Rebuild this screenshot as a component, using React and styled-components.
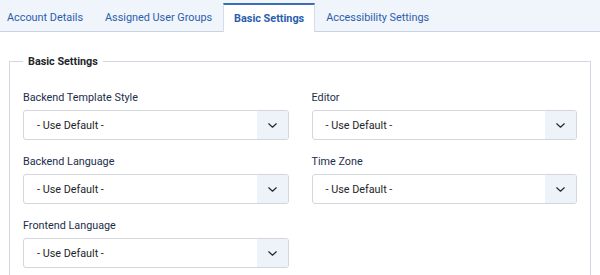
import React from "react";
import styled, { createGlobalStyle } from "styled-components";

const Global = createGlobalStyle`
  html, body { margin: 0; padding: 0; background: #fff; }
  body { font-family: Roboto, "Liberation Sans", sans-serif; }
  * { box-sizing: border-box; }
`;

const Page = styled.div`
  width: 600px;
  height: 275px;
  overflow: hidden;
  background: #fff;
`;

const TabBar = styled.div`
  display: flex;
  align-items: flex-end;
  height: 32px;
  background: #f0f4fb;
  border-bottom: 1px solid #c9d3e3;
`;

const Tab = styled.div`
  height: ${(p) => (p.$active ? "29px" : "28px")};
  display: flex;
  align-items: center;
  padding: 0 ${(p) => (p.$active ? "10px" : "11px")};
  margin-bottom: ${(p) => (p.$active ? "-1px" : "0")};
  font-size: 10.85px;
  color: #2a5ead;
  font-weight: ${(p) => (p.$active ? 700 : 400)};
  background: ${(p) => (p.$active ? "#fff" : "transparent")};
  border-top: ${(p) => (p.$active ? "2px solid #3d6db5" : "none")};
  border-left: ${(p) => (p.$active ? "1px solid #d5dde9" : "none")};
  border-right: ${(p) => (p.$active ? "1px solid #d5dde9" : "none")};
  white-space: nowrap;
  &:first-child { padding-left: 7px; }
`;

const Fieldset = styled.fieldset`
  margin: 23px 9px 0 9px;
  padding: 23px 13px 20px 13px;
  border: 1px solid #d0d7e2;
  border-radius: 0;
  min-width: 0;
`;

const Legend = styled.legend`
  font-size: 10.8px;
  font-weight: 700;
  color: #22262a;
  padding: 0 5px;
  margin-left: 0;
`;

const Grid = styled.div`
  display: grid;
  grid-template-columns: 1fr 1fr;
  column-gap: 23px;
  row-gap: 15px;
`;

const Field = styled.div`
  display: flex;
  flex-direction: column;
`;

const Label = styled.label`
  font-size: 10.8px;
  color: #1c2d4b;
  margin-bottom: 5px;
  line-height: 14px;
`;

const Select = styled.div`
  display: flex;
  height: 30px;
  border: 1px solid #d3d6da;
  border-radius: 3px;
  overflow: hidden;
  background: #fff;
`;

const Value = styled.div`
  flex: 1;
  display: flex;
  align-items: center;
  padding-left: 13px;
  font-size: 10.8px;
  color: #22262a;
`;

const Arrow = styled.div`
  width: 31px;
  display: flex;
  align-items: center;
  justify-content: center;
  background: #eef2f9;
`;

const Chevron = () => (
  <svg width="9" height="5" viewBox="0 0 9 5" fill="none">
    <path d="M0.75 0.75l3.75 3.5 3.75-3.5" stroke="#22262a" strokeWidth="1.1" strokeLinecap="round" strokeLinejoin="round" />
  </svg>
);

const SelectBox = ({ label }) => (
  <Field>
    <Label>{label}</Label>
    <Select>
      <Value>- Use Default -</Value>
      <Arrow>
        <Chevron />
      </Arrow>
    </Select>
  </Field>
);

export default function App() {
  return (
    <Page>
      <Global />
      <TabBar>
        <Tab>Account Details</Tab>
        <Tab>Assigned User Groups</Tab>
        <Tab $active>Basic Settings</Tab>
        <Tab>Accessibility Settings</Tab>
      </TabBar>
      <Fieldset>
        <Legend>Basic Settings</Legend>
        <Grid>
          <SelectBox label="Backend Template Style" />
          <SelectBox label="Editor" />
          <SelectBox label="Backend Language" />
          <SelectBox label="Time Zone" />
          <SelectBox label="Frontend Language" />
        </Grid>
      </Fieldset>
    </Page>
  );
}
